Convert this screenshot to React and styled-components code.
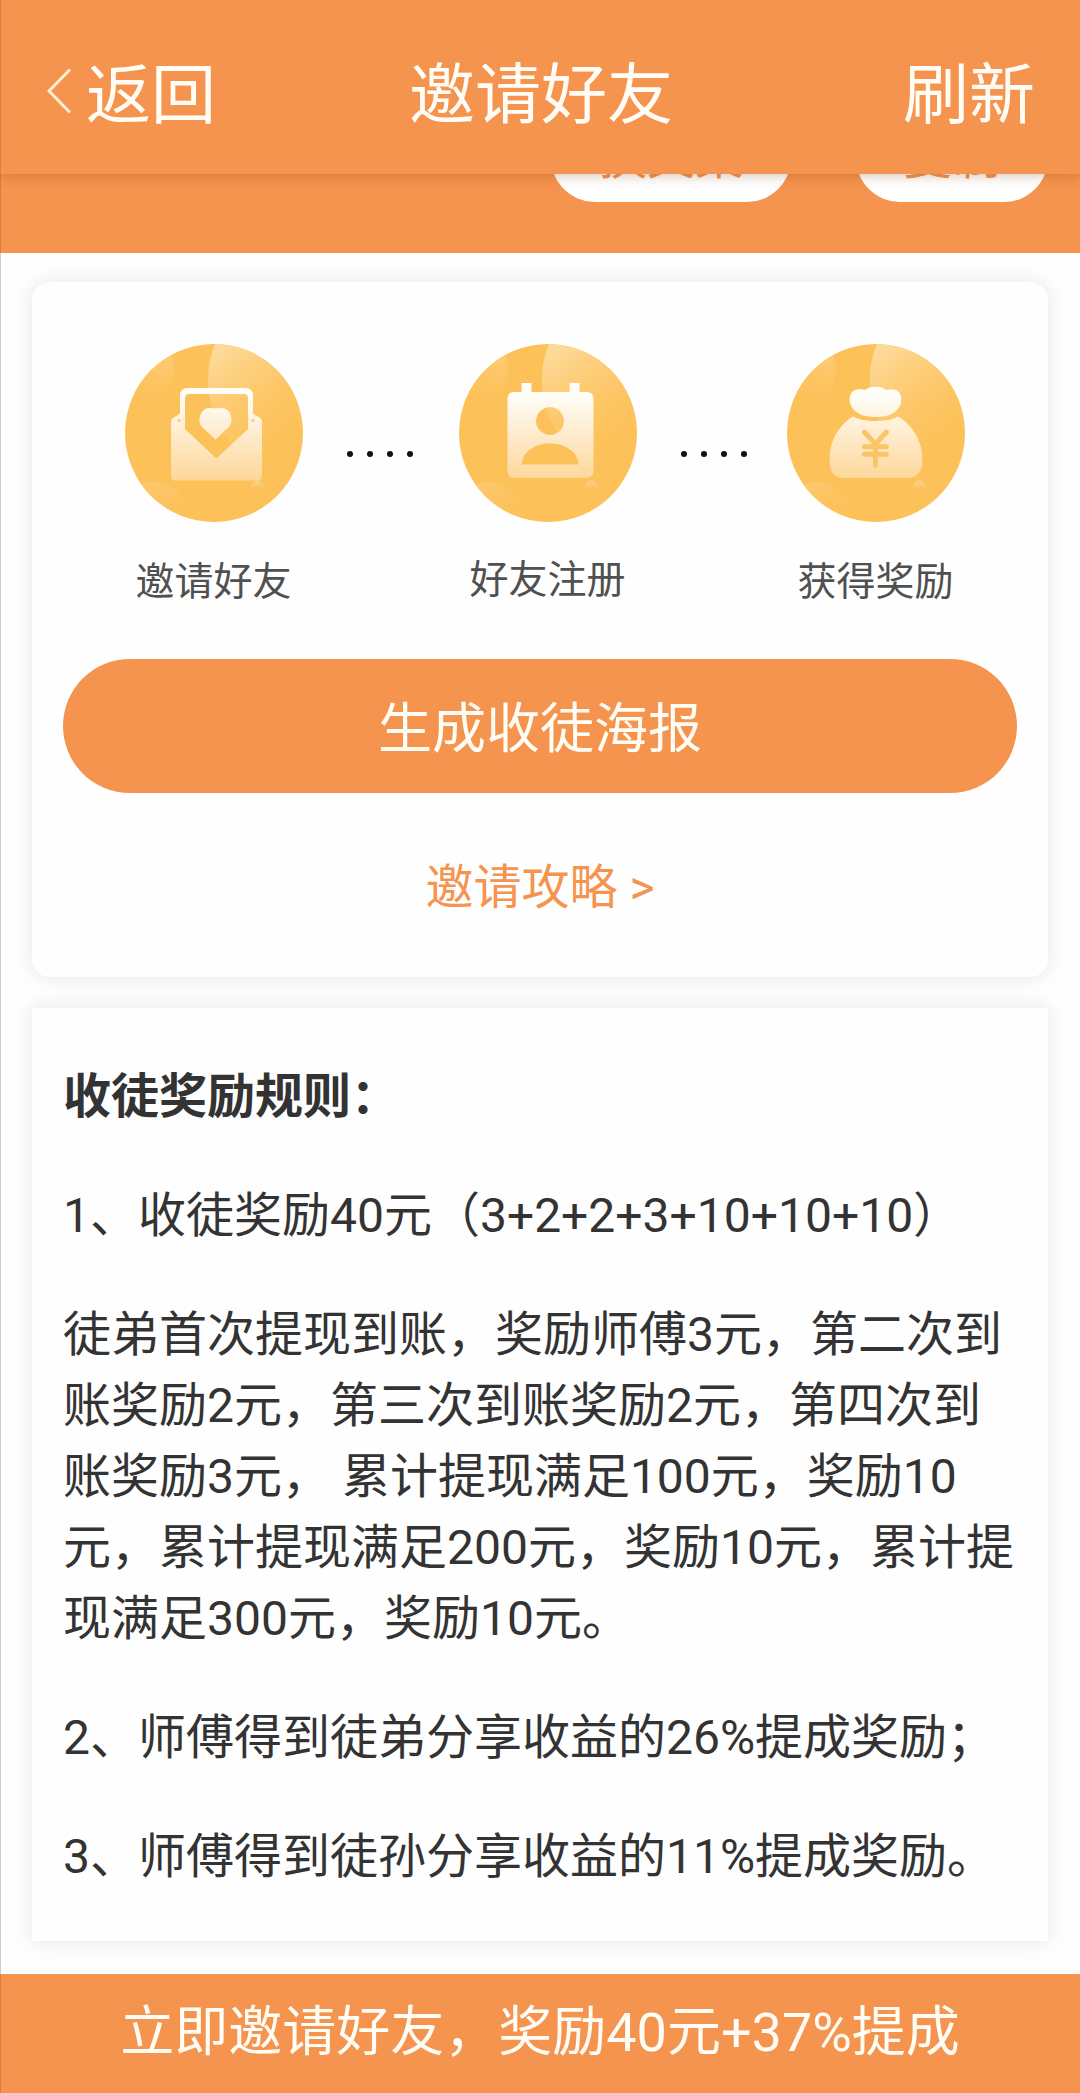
import React from 'react';
import styled, { createGlobalStyle } from 'styled-components';
import { JapaneseYen } from 'lucide-react';

const rules = [
    '1、收徒奖励40元（3+2+2+3+10+10+10）',
    '徒弟首次提现到账，奖励师傅3元，第二次到账奖励2元，第三次到账奖励2元，第四次到账奖励3元， 累计提现满足100元，奖励10元，累计提现满足200元，奖励10元，累计提现满足300元，奖励10元。',
    '2、师傅得到徒弟分享收益的26%提成奖励；',
    '3、师傅得到徒孙分享收益的11%提成奖励。',
];

export default function App() {
    return (
        <React.Fragment>
            <GlobalStyle />
            <Page>
                <Header>
                    <BackButton>
                        <BackArrow viewBox="0 0 24 46">
                            <path d="M22.5 1.5L1.5 23l21 21.5" />
                        </BackArrow>
                        返回
                    </BackButton>
                    <Title>邀请好友</Title>
                    <RefreshButton>刷新</RefreshButton>
                </Header>

                <Banner>
                    <Pill>换文案</Pill>
                    <Pill>复制</Pill>
                </Banner>

                <Content>
                    <InviteCard>
                        <Steps>
                            <Step>
                                <Badge id="invite"><EnvelopeIcon /></Badge>
                                <StepLabel>邀请好友</StepLabel>
                            </Step>
                            <Dots $after={45}><i /><i /><i /><i /></Dots>
                            <Step>
                                <Badge id="register"><MemberIcon /></Badge>
                                <StepLabel $raised>好友注册</StepLabel>
                            </Step>
                            <Dots $after={39}><i /><i /><i /><i /></Dots>
                            <Step>
                                <Badge id="reward"><BagIcon /></Badge>
                                <StepLabel>获得奖励</StepLabel>
                            </Step>
                        </Steps>
                        <PosterButton>生成收徒海报</PosterButton>
                        <GuideLink>邀请攻略 &gt;</GuideLink>
                    </InviteCard>

                    <RulesCard>
                        <RulesTitle>收徒奖励规则：</RulesTitle>
                        {rules.map((rule) => <Rule key={rule}>{rule}</Rule>)}
                    </RulesCard>
                </Content>

                <Footer>立即邀请好友，奖励40元+37%提成</Footer>
            </Page>
        </React.Fragment>
    )
}

// round yellow background shared by the three steps
function Badge({ id, children }) {
    return (
        <BadgeSvg viewBox="0 0 178 178">
            <defs>
                <clipPath id={`${id}-clip`}><circle cx="89" cy="89" r="89" /></clipPath>
                <linearGradient id={`${id}-big`} gradientUnits="userSpaceOnUse" x1="85" y1="15" x2="160" y2="115">
                    <stop offset="0" stopColor="#fdda99" />
                    <stop offset="1" stopColor="#fdc159" stopOpacity="0" />
                </linearGradient>
                <linearGradient id={`${id}-small`} x1="0.6" y1="0" x2="0.5" y2="1">
                    <stop offset="0.2" stopColor="#fdcd7c" />
                    <stop offset="1" stopColor="#fdc159" stopOpacity="0.2" />
                </linearGradient>
                <linearGradient id={`${id}-low`} x1="0.5" y1="0" x2="0.6" y2="0.6">
                    <stop offset="0" stopColor="#fdc86e" />
                    <stop offset="1" stopColor="#fdc159" stopOpacity="0" />
                </linearGradient>
                <linearGradient id={`${id}-spot`} x1="0.5" y1="0" x2="0.5" y2="0.9">
                    <stop offset="0" stopColor="#fdd596" />
                    <stop offset="1" stopColor="#fdc159" stopOpacity="0" />
                </linearGradient>
                <linearGradient id={`${id}-shape`} gradientUnits="userSpaceOnUse" x1="0" y1="52" x2="0" y2="138">
                    <stop offset="0" stopColor="#fffdf8" />
                    <stop offset="1" stopColor="#fdd697" />
                </linearGradient>
            </defs>
            <g clipPath={`url(#${id}-clip)`}>
                <rect width="178" height="178" fill="#fdc159" />
                <circle cx="183" cy="36" r="100" fill={`url(#${id}-big)`} />
                <circle cx="13" cy="25" r="36" fill={`url(#${id}-small)`} />
                <circle cx="28" cy="175" r="37" fill={`url(#${id}-low)`} />
                <circle cx="132.5" cy="143" r="6.5" fill={`url(#${id}-spot)`} />
            </g>
            <g fill={`url(#${id}-shape)`}>{children}</g>
        </BadgeSvg>
    )
}

function EnvelopeIcon() {
    return (
        <React.Fragment>
            <path
                fillRule="evenodd"
                d="M46 78q0-4 4.500-5.500l4.500-3V52q0-8 8-8h57q8 0 8 8v17.500l4.500 3q4.500 1.500 4.500 5.500v53q0 5.500-5.500 5.500h-80q-5.500 0-5.500-5.500zM60 54q0-4 4-4h55q4 0 4 4v31l-31.700 29.500L60 85z"
            />
            <path d="M90.500 95.500L77.500 83.500c-6-6-2.500-19.500 7-19.500 2.500 0 4.500.2 6 .5 1.500-.3 3.500-.5 6-.5 9.500 0 13 13.500 7 19.500z" />
            <circle cx="54" cy="76.500" r="1.500" fill="#fdc97a" />
            <circle cx="128" cy="76.500" r="1.500" fill="#fdc97a" />
        </React.Fragment>
    )
}

function MemberIcon() {
    return (
        <path
            fillRule="evenodd"
            d="M62.500 39h10v9h38v-9h10v9h7q7 0 7 7v72q0 7-7 7h-72q-7 0-7-7V55q0-7 7-7h7zM91 63a14 14 0 1 0 .01 0zM63 120.500h56.500c0-13-14-21-28.500-21s-28 8-28 21z"
        />
    )
}

function BagIcon() {
    return (
        <React.Fragment>
            <path d="M68 46c4-1.500 8 0 10 0 4-4.500 17-4.500 21 0 3 0 6-1.500 10 0 7 3 7 14 1 20-5 5-12 7-21.500 7S72 71 67 66c-6-6-6-17 1-20z" />
            <path d="M66 72.500c6 3 13 4.500 22.500 4.500s17-1.500 22.500-4.500c14 8 24.500 24 24.500 43.500 0 12-6 18-15 18h-64c-9 0-14-6-14-18 0-19.500 10-35.500 23.500-43.500z" />
            <JapaneseYen x={66.2} y={82.5} width={44.4} height={44.4} strokeWidth={2.7} color="#fcc469" fill="none" />
        </React.Fragment>
    )
}

const GlobalStyle = createGlobalStyle`
body{
    margin:0;
    background:#fefefe;
    font-family:Roboto, "Noto Sans CJK SC", sans-serif;
}
`
const Page = styled.div `
box-sizing:border-box;
width:1080px;
height:2093px;
display:flex;
flex-direction:column;
overflow:hidden;
box-shadow:inset 1px 0 0 #ccc;
`
const Header = styled.header `
position:relative;
z-index:1;
flex:none;
box-sizing:border-box;
height:174px;
padding:17px 45px 0 47px;
display:grid;
grid-template-columns:1fr auto 1fr;
align-items:center;
background-color:#f5944f;
box-shadow:0 2px 12px rgba(120,50,0,0.28), inset 1px 0 0 #d98045;
color:#fffdf5;
font-size:66px;
line-height:96px;
`
const BackButton = styled.div `
display:flex;
align-items:center;
font-size:65px;
`
const BackArrow = styled.svg `
width:25px;
height:46px;
margin:-9px 14px 0 0;
fill:none;
stroke:#ffeed6;
stroke-width:3;
`
const Title = styled.div `
text-align:center;
`
const RefreshButton = styled.div `
text-align:right;
`
const Banner = styled.div `
flex:none;
display:flex;
justify-content:flex-end;
gap:65px;
margin-top:-80px;
padding:20px 32px 51px;
background-color:#f5944f;
box-shadow:inset 1px 0 0 #d98045;
`
const Pill = styled.div `
height:88px;
padding:0 48px;
border-radius:44px;
background-color:white;
color:#f5944f;
font-size:48px;
line-height:88px;
`
const Content = styled.main `
flex:1;
display:flex;
flex-direction:column;
gap:31px;
padding:29px 32px 33px;
`
const InviteCard = styled.section `
height:695px;
box-sizing:border-box;
padding-top:62px;
border-radius:18px;
background-color:#fefefe;
box-shadow:0 0 20px rgba(0,0,0,0.1);
display:flex;
flex-direction:column;
`
const Steps = styled.div `
display:flex;
align-items:flex-start;
height:315px;
padding-left:92.5px;
`
const Step = styled.div `
width:178px;
text-align:center;
`
const BadgeSvg = styled.svg `
display:block;
width:178px;
height:178px;
`
const StepLabel = styled.div `
margin-top:${props => props.$raised ? '30px' : '32px'};
color:#505050;
font-size:39px;
line-height:56px;
`
const Dots = styled.div `
display:flex;
justify-content:space-between;
width:67px;
margin:107px ${props => props.$after}px 0 44px;

i{
    width:6px;
    height:6px;
    border-radius:50%;
    background-color:#111;
}
`
const PosterButton = styled.div `
box-sizing:border-box;
height:134px;
margin:0 31px;
padding-top:4px;
border-radius:67px;
background-color:#f5944f;
color:#fffdf5;
font-size:54px;
line-height:134px;
text-align:center;
`
const GuideLink = styled.div `
margin-top:59px;
color:#f5944f;
font-size:48px;
line-height:72px;
text-align:center;
`
const RulesCard = styled.section `
flex:1;
padding:53px 32px 0 31px;
background-color:#fefefe;
box-shadow:0 0 20px rgba(0,0,0,0.1);
color:#333;
font-size:48px;
line-height:71px;
`
const RulesTitle = styled.div `
font-weight:bold;
`
const Rule = styled.p `
margin:48px 0 0;
`
const Footer = styled.footer `
flex:none;
height:119px;
background-color:#f5944f;
box-shadow:inset 1px 0 0 #d98045;
color:#fffdf5;
font-size:54px;
line-height:117px;
text-align:center;
`
